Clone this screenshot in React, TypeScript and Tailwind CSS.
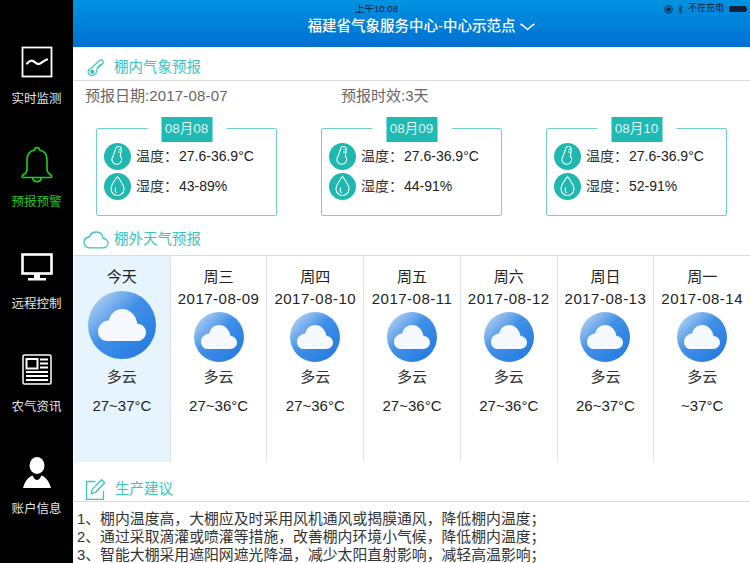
import React from "react";

const font = { fontFamily: '"Liberation Sans","Noto Sans CJK SC",sans-serif' };

// 左侧导航图标
function MonitorIcon() {
  return (
    <svg width="32" height="32" viewBox="0 0 32 32" fill="none">
      <rect x="1.500" y="1.500" width="29" height="29" stroke="#fff" strokeWidth="1.800" />
      <path d="M6 17.500C8.500 15 10 14 12 15s4 3.500 6 3 4-3 8-4.500" stroke="#fff" strokeWidth="2.300" strokeLinecap="round" />
    </svg>
  );
}

function BellIcon() {
  return (
    <svg width="32" height="38" viewBox="0 0 32 38" fill="none" stroke="#1fd11f" strokeWidth="1.600" strokeLinejoin="round">
      <path d="M16 1.500c-1.500 0-2.500 1-2.500 2.500C8.500 5 6 9 6 14v9c0 3-1.500 4.500-4 6-1.200.800-1 2.500.500 2.500h27c1.500 0 1.700-1.700.500-2.500-2.500-1.500-4-3-4-6v-9c0-5-2.500-9-7.500-10 0-1.500-1-2.500-2.500-2.500z" />
      <path d="M11.500 31.500c.5 2.500 2.200 4.200 4.500 4.200s4-1.700 4.500-4.200" />
    </svg>
  );
}

function ScreenIcon() {
  return (
    <svg width="32" height="28" viewBox="0 0 32 28" fill="none">
      <rect x="1.500" y="1.500" width="29" height="19" stroke="#fff" strokeWidth="2.600" />
      <rect x="13" y="21" width="6" height="4" fill="#fff" />
      <rect x="7" y="25" width="18" height="2.500" fill="#fff" />
    </svg>
  );
}

function NewsIcon() {
  return (
    <svg width="30" height="31" viewBox="0 0 30 31" fill="none" stroke="#fff">
      <rect x="1" y="1" width="28" height="29" rx="1.500" strokeWidth="1.500" />
      <rect x="4.500" y="5" width="11" height="9.500" strokeWidth="2" />
      <path d="M18 5.500h8M18 9.500h8M18 13.500h8M4 18h22M4 22h22M4 26h22" strokeWidth="2" />
    </svg>
  );
}

function PersonIcon() {
  return (
    <svg width="28" height="31" viewBox="0 0 28 31" fill="#fff">
      <ellipse cx="14" cy="8.500" rx="7.500" ry="8.500" />
      <path d="M9.500 18.500c1.500 3 3 4.500 4.500 4.500s3-1.500 4.500-4.500c3 1.500 7 3.500 9.500 12.500H0c2.500-9 6.500-11 9.500-12.500z" />
    </svg>
  );
}

function ThermoLine() {
  return (
    <svg width="27" height="27" viewBox="0 0 27 27" fill="none" stroke="#fff" strokeWidth="1.100">
      <path d="M11.500 6.500c0-2 1.500-3.300 3.500-3 1.600.200 2.500 1.600 2.300 3.200l-1 6.500c1.500 1.800 1.700 4.200.400 6-1.500 2.200-4.600 2.800-6.800 1.200-2.300-1.600-2.700-4.700-1-6.800l2.600-7.100z" />
      <path d="M14.500 6.500h2M14 9h2" />
    </svg>
  );
}

function DropLine() {
  return (
    <svg width="27" height="27" viewBox="0 0 27 27" fill="none" stroke="#fff" strokeWidth="1.100">
      <path d="M13.500 3.500c3.500 4.800 6.500 8.500 6.500 12.300 0 3.700-2.900 6.700-6.500 6.700S7 19.500 7 15.800c0-3.800 3-7.500 6.500-12.300z" />
      <path d="M12 14.500c-1.500 2-1.200 4.300.8 5.300" />
    </svg>
  );
}

function SectionThermo() {
  return (
    <svg width="18" height="18" viewBox="0 0 18 18" fill="none" stroke="#3cc4c0" strokeWidth="1.200">
      <path d="M12.500 1.500c1.300-.9 2.700-.4 3.400.5.700 1 .5 2.100-.4 2.900L9.800 10c.3 2.500-.8 5.200-3.700 6.300C3.800 17 1.700 15.800 1.200 13.800.800 11.500 2 9.700 4.500 9l8-7.500z" />
      <circle cx="5.200" cy="12.700" r="2.200" fill="#3cc4c0" stroke="none" />
      <path d="M10.500 8.500l4-3.800" />
    </svg>
  );
}

function SectionCloud() {
  return (
    <svg width="26" height="18" viewBox="0 0 26 18" fill="none" stroke="#3cc4c0" strokeWidth="1.300">
      <path d="M6.500 16.800h13.500c2.800 0 5-2 5-4.700 0-2.500-2-4.500-4.700-4.600C19.500 3.500 16.700 1 13.300 1 10 1 7.400 3 6.500 6 3.300 6.300 1 8.500 1 11.400c0 3 2.400 5.400 5.500 5.400z" />
    </svg>
  );
}

function SectionEdit() {
  return (
    <svg width="21" height="21" viewBox="0 0 21 21" fill="none" stroke="#3cc4c0" strokeWidth="1.300" strokeLinejoin="round">
      <path d="M10 2.500H1.500v18H18.500v-8" strokeLinecap="round" />
      <path d="M16.500.8l3.200 3L10.500 13.500l-4.200 1.200 1-4.300z" />
    </svg>
  );
}

function WeatherCircle({ big }: { big?: boolean }) {
  return (
    <div
      className={`flex items-center justify-center rounded-full bg-gradient-to-br from-[#c9dff6] via-[#3f90e6] via-45% to-[#1e76e0] ${
        big ? "h-[68px] w-[68px]" : "h-[50px] w-[50px]"
      }`}>
      <svg width={big ? 48 : 36} height={big ? 32 : 24} viewBox="0 0 48 32" fill="#f5f9fe">
        <path d="M9 32h30c5 0 9-3.900 9-8.600 0-4.800-3.800-8.500-8.600-8.700C38 6.300 31.800 0 24.500 0c-6.800 0-12 4.500-13.700 11.300C5 11.800 0 16.500 0 22.500 0 28 4 32 9 32z" />
      </svg>
    </div>
  );
}

const navItems = [
  { label: "实时监测", icon: <MonitorIcon />, active: false },
  { label: "预报预警", icon: <BellIcon />, active: true },
  { label: "远程控制", icon: <ScreenIcon />, active: false },
  { label: "农气资讯", icon: <NewsIcon />, active: false },
  { label: "账户信息", icon: <PersonIcon />, active: false },
];

const forecast = [
  { date: "08月08", hum: "43-89%" },
  { date: "08月09", hum: "44-91%" },
  { date: "08月10", hum: "52-91%" },
];

const days = [
  { day: "今天", date: "", temp: "27~37°C", today: true },
  { day: "周三", date: "2017-08-09", temp: "27~36°C" },
  { day: "周四", date: "2017-08-10", temp: "27~36°C" },
  { day: "周五", date: "2017-08-11", temp: "27~36°C" },
  { day: "周六", date: "2017-08-12", temp: "27~36°C" },
  { day: "周日", date: "2017-08-13", temp: "26~37°C" },
  { day: "周一", date: "2017-08-14", temp: "~37°C" },
];

export default function App() {
  return (
    <div className="flex h-[563px] w-[750px] overflow-hidden bg-white" style={font}>
      {/* 侧边栏 */}
      <div className="flex w-[73px] shrink-0 flex-col bg-black pt-[43px]">
        {navItems.map((item) => (
          <div key={item.label} className="flex h-[102.500px] flex-col items-center">
            <div className="flex h-[38px] items-center justify-center">{item.icon}</div>
            <div className={`mt-[10px] text-[12.500px] leading-[16px] ${item.active ? "text-[#1fc71f]" : "text-[#e4e4e4]"}`}>
              {item.label}
            </div>
          </div>
        ))}
      </div>

      <div className="flex min-w-0 flex-1 flex-col">
        {/* 顶部 */}
        <div className="h-[47px] shrink-0 bg-gradient-to-b from-[#0093e2] to-[#006fd2]">
          <div className="flex h-[16px] items-center justify-between pl-[282px] pr-[3px] pt-[2px] text-[9.500px] text-[#0c2238]">
            <span>上午10:08</span>
            <div className="flex items-center gap-[5px]">
              <svg width="9" height="9" viewBox="0 0 9 9" fill="none" stroke="#0c2238" strokeWidth="0.800">
                <circle cx="4.500" cy="4.500" r="3.800" />
                <circle cx="4.500" cy="4.500" r="1.800" fill="#0c2238" />
              </svg>
              <svg width="5" height="9" viewBox="0 0 5 9" fill="none" stroke="#0c2238" strokeWidth="0.700">
                <path d="M.3 2.500l4 4-2 2V.5l2 2-4 4" />
              </svg>
              <span className="text-[9px]">不在充电</span>
              <div className="flex items-center">
                <span className="h-[6px] w-[17px] rounded-[1px] bg-[#0c2238]" />
                <span className="h-[3px] w-[1px] bg-[#0c2238]" />
              </div>
            </div>
          </div>
          <div className="flex h-[21px] items-center justify-center gap-[5px] pl-[20px] text-[14.500px] font-medium text-white">
            <span>福建省气象服务中心-中心示范点</span>
            <svg width="15" height="8" viewBox="0 0 15 8" fill="none" stroke="#fff" strokeWidth="1.500">
              <path d="M.5 1c3 1.500 5 3.500 7 5.500 2-2 4-4 7-5.500" />
            </svg>
          </div>
        </div>

        {/* 棚内气象预报 */}
        <div className="flex h-[34px] shrink-0 items-center border-b border-[#dcdcdc] pl-[14px] pt-[9px]">
          <SectionThermo />
          <span className="ml-[9px] text-[14.500px] text-[#3cc4c0]">棚内气象预报</span>
        </div>
        <div className="flex h-[30px] shrink-0 items-center pl-[12px] text-[15px] text-[#666]">
          <span className="w-[256px]">
            预报日期:<span className="tracking-[0.200px]">2017-08-07</span>
          </span>
          <span>预报时效:3天</span>
        </div>
        <div className="mt-[16.500px] flex shrink-0 gap-[44px] pl-[23px]">
          {forecast.map((f) => (
            <div key={f.date} className="relative h-[88px] w-[181px] rounded-[2px] border-[1.500px] border-[#72d0cc] pl-[7px] pt-[14px]">
              <div className="absolute left-1/2 top-[-12px] -translate-x-1/2 bg-white px-[14px]">
                <div className="flex h-[25px] w-[51px] items-center justify-center bg-[#1fbab3] text-[13.500px] text-[#dff5f3]">
                  {f.date}
                </div>
              </div>
              <div className="flex h-[27px] items-center">
                <div className="flex h-[27px] w-[27px] items-center justify-center rounded-full bg-[#1fb8b0]">
                  <ThermoLine />
                </div>
                <span className="ml-[5px] w-[43px] text-[14px] text-[#333]">温度：</span>
                <span className="text-[14px] text-[#222]">27.6-36.9°C</span>
              </div>
              <div className="mt-[3px] flex h-[27px] items-center">
                <div className="flex h-[27px] w-[27px] items-center justify-center rounded-full bg-[#1fb8b0]">
                  <DropLine />
                </div>
                <span className="ml-[5px] w-[43px] text-[14px] text-[#333]">湿度：</span>
                <span className="text-[14px] text-[#222]">{f.hum}</span>
              </div>
            </div>
          ))}
        </div>

        {/* 棚外天气预报 */}
        <div className="flex h-[40px] shrink-0 items-center border-b border-[#dcdcdc] pl-[10px] pt-[10px]">
          <SectionCloud />
          <span className="ml-[5px] text-[14.500px] text-[#3cc4c0]">棚外天气预报</span>
        </div>
        <div className="flex h-[206px] shrink-0 pl-[1px]">
          {days.map((d) => (
            <div
              key={d.day}
              className={`flex flex-1 flex-col items-center border-r border-[#dfe3e8] pt-[10px] last:border-r-0 ${d.today ? "bg-[#e6f4fe]" : ""}`}>
              <div className="h-[21px] text-[15px] leading-[21px] text-[#222]">{d.day}</div>
              <div className="flex h-[76px] flex-col items-center justify-end">
                {d.date && <div className="mb-[2px] text-[15px] leading-[22px] tracking-[0.500px] text-[#222]">{d.date}</div>}
                <div className={d.today ? "mb-[4px]" : "mb-[1px]"}>
                  <WeatherCircle big={d.today} />
                </div>
              </div>
              <div className="mt-[3px] h-[21px] text-[15px] leading-[21px] text-[#333]">多云</div>
              <div className="mt-[8px] text-[15px] leading-[21px] text-[#222]">{d.temp}</div>
            </div>
          ))}
        </div>

        {/* 生产建议 */}
        <div className="flex h-[40px] shrink-0 items-center border-b border-[#dcdcdc] pl-[12px] pt-[17px]">
          <SectionEdit />
          <span className="ml-[9px] text-[14.500px] text-[#3cc4c0]">生产建议</span>
        </div>
        <div className="whitespace-nowrap pl-[4px] pt-[8px] text-[14.850px] leading-[18px] text-[#333]">
          <div>1、棚内温度高，大棚应及时采用风机通风或揭膜通风，降低棚内温度；</div>
          <div>2、通过采取滴灌或喷灌等措施，改善棚内环境小气候，降低棚内温度；</div>
          <div>3、智能大棚采用遮阳网遮光降温，减少太阳直射影响，减轻高温影响；</div>
        </div>
      </div>
    </div>
  );
}
